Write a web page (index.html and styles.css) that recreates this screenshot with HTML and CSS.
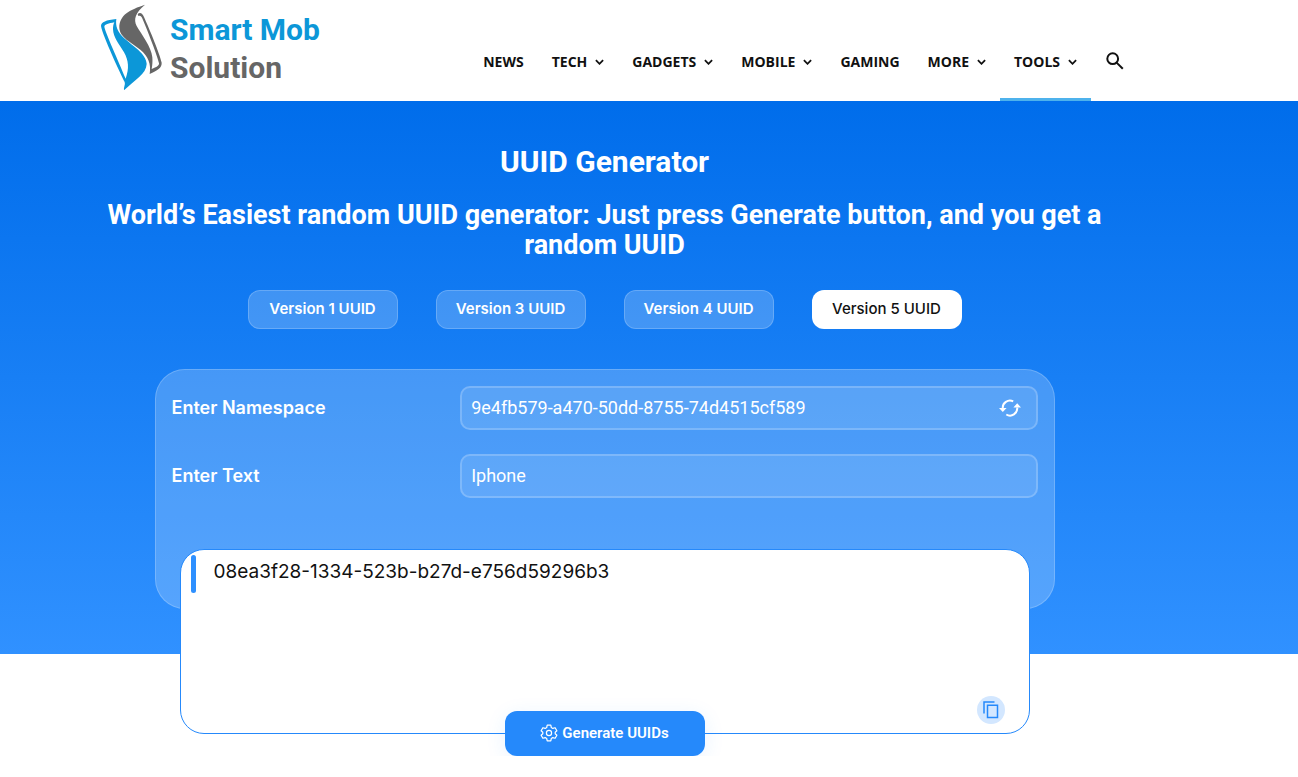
FILE: index.html
```html
<!DOCTYPE html>
<html lang="en">
<head>
    <meta charset="UTF-8">
    <meta name="viewport" content="width=device-width, initial-scale=1.0">
    <title>UUID Generator</title>
    <link rel="stylesheet" href="styles.css">
</head>
<body>
    <header class="site-header">
        <a class="logo" href="#">
            <svg class="logo-mark" viewBox="0 0 210 285" aria-hidden="true">
                <path fill="#0c97d8" fill-rule="evenodd" d="M9 78C10 66 24 60 55 57C52 78 58 95 77 113C104 138 145 160 146 192C145 222 110 240 78 271C76 262 83 254 80 246C68 222 14 108 9 78ZM19 80C23 100 60 180 83 236C94 205 92 182 78 157C62 130 46 112 45 88C45 79 46 73 49 67C32 70 20 73 19 80Z"/>
                <path fill="#666" fill-rule="evenodd" d="M141 14C112 38 106 58 116 78C131 104 160 140 163 172C164 186 163 197 161 207C176 202 184 196 183 190C172 151 149 94 134 58C131 50 128 46 121 48L119 42C127 35 134 41 139 53C157 94 184 158 191 188C192 204 178 211 155 222C160 192 151 169 127 149C102 128 65 113 64 83C64 44 96 29 141 14Z"/>
            </svg>
            <span class="logo-text"><span class="logo-top">Smart Mob</span><span>Solution</span></span>
        </a>
        <nav class="menu">
            <a href="#">NEWS</a>
            <a href="#">TECH <svg class="caret" viewBox="0 0 10 6"><path d="M1 1l4 4 4-4"/></svg></a>
            <a href="#">GADGETS <svg class="caret" viewBox="0 0 10 6"><path d="M1 1l4 4 4-4"/></svg></a>
            <a href="#">MOBILE <svg class="caret" viewBox="0 0 10 6"><path d="M1 1l4 4 4-4"/></svg></a>
            <a href="#">GAMING</a>
            <a href="#">MORE <svg class="caret" viewBox="0 0 10 6"><path d="M1 1l4 4 4-4"/></svg></a>
            <a class="current" href="#">TOOLS <svg class="caret" viewBox="0 0 10 6"><path d="M1 1l4 4 4-4"/></svg></a>
            <button class="search" type="button" aria-label="Search">
                <svg viewBox="0 0 18 18"><circle cx="6.7" cy="6.7" r="5.4"/><path d="M10.6 10.6l6.2 6.2"/></svg>
            </button>
        </nav>
    </header>

    <main class="hero">
        <h1>UUID Generator</h1>
        <h2>World’s Easiest random UUID generator: Just press Generate button, and you get a random UUID</h2>

        <div class="tabs">
            <button type="button">Version 1 UUID</button>
            <button type="button">Version 3 UUID</button>
            <button type="button">Version 4 UUID</button>
            <button type="button" class="active">Version 5 UUID</button>
        </div>

        <form class="panel">
            <div class="field">
                <label for="namespace">Enter Namespace</label>
                <div class="box">
                    <input type="text" id="namespace" value="9e4fb579-a470-50dd-8755-74d4515cf589">
                    <button type="button" class="refresh" aria-label="New namespace">
                        <svg viewBox="0 0 22 18"><path class="arc" d="M14.2 2.3A7.2 7.2 0 0 0 3.8 9.5M7.3 15.5A7.2 7.2 0 0 0 18.2 8.5"/><path class="head" d="M0 9h7.6l-3.8 4zM14.4 8.5H22l-3.8-4.2z"/></svg>
                    </button>
                </div>
            </div>
            <div class="field">
                <label for="text">Enter Text</label>
                <div class="box">
                    <input type="text" id="text" value="Iphone">
                </div>
            </div>
        </form>

        <div class="result">
            <p>08ea3f28-1334-523b-b27d-e756d59296b3</p>
            <button type="button" class="copy" aria-label="Copy">
                <svg viewBox="0 0 16 18"><path d="M1 12.5V1h10.5"/><path d="M4.5 4.2h10v12.3h-10z"/></svg>
            </button>
        </div>

        <button type="button" class="generate">
            <svg viewBox="0 0 18 18"><path d="M7.2 1.2h3.6l.5 2.3 1.5.9 2.3-.7 1.8 3.1L15.2 8.3v1.4l1.7 1.5-1.8 3.1-2.3-.7-1.5.9-.5 2.3H7.2l-.5-2.3-1.5-.9-2.3.7-1.8-3.1 1.7-1.5V8.3L1.1 6.8l1.8-3.1 2.3.7 1.5-.9z"/><circle cx="9" cy="9" r="2.6"/></svg>
            Generate UUIDs
        </button>
    </main>
</body>
</html>
```

FILE: styles.css
```css
* {
    box-sizing: border-box;
}
body {
    margin: 0;
    background-color: #fff;
    font-family: Roboto, sans-serif;
}
button {
    font-family: inherit;
    border: none;
    padding: 0;
    cursor: pointer;
}
svg {
    fill: none;
    stroke-width: 2px;
}

/* header */
.site-header {
    display: flex;
    justify-content: space-between;
    height: 101px;
    padding: 0 173px 0 98px;
}
.logo {
    display: flex;
    gap: 2px;
    text-decoration: none;
}
.logo-mark {
    width: 70px;
    height: 95px;
}
.logo-text {
    display: flex;
    flex-direction: column;
    padding-top: 11px;
    font-size: 30px;
    font-weight: 700;
    line-height: 38px;
    color: #666;
}
.logo-top {
    color: #0c97d8;
}
.menu {
    display: flex;
    padding-top: 25px;
}
.menu a {
    display: flex;
    align-items: center;
    gap: 8px;
    padding: 0 14px;
    border-bottom: 3px solid transparent;
    font-family: "Open Sans", sans-serif;
    font-size: 14px;
    font-weight: 700;
    color: #111;
    text-decoration: none;
}
.menu a.current {
    border-color: #4db2ec;
}
.caret {
    width: 9px;
    height: 6px;
    stroke: #111;
}
.search {
    width: 34px;
    padding: 0 0 2px 14px;
    background: none;
}
.search svg {
    width: 18px;
    height: 18px;
    stroke: #111;
}

/* blue area, ends behind the result box */
.hero {
    display: flex;
    flex-direction: column;
    align-items: center;
    padding: 43px 184px 0 95px;
    background: linear-gradient(#006deb, #3091ff) no-repeat 0 0 / 100% calc(100% - 102px);
    color: #fff;
}
h1 {
    margin: 0;
    font-size: 30px;
    line-height: 36px;
}
h2 {
    margin: 20px 0 30px;
    font-size: 27px;
    line-height: 30px;
    text-align: center;
}
.tabs {
    display: flex;
    gap: 38px;
    margin-bottom: 40px;
}
.tabs button {
    width: 150px;
    height: 39px;
    padding-bottom: 2px;
    border: 1px solid rgba(255, 255, 255, 0.2);
    border-radius: 12px;
    background-color: rgba(255, 255, 255, 0.2);
    font-family: Inter, sans-serif;
    font-size: 15px;
    font-weight: 600;
    color: #fff;
}
.tabs button.active {
    background-color: #fff;
    font-weight: 500;
    color: #111;
}
.panel {
    width: 100%;
    max-width: 900px;
    height: 240px;
    padding: 16px;
    border: 1px solid rgba(255, 255, 255, 0.2);
    border-radius: 30px;
    background-color: rgba(255, 255, 255, 0.2);
}
.field {
    display: grid;
    grid-template-columns: 1fr 2fr;
    align-items: center;
    margin-bottom: 24px;
}
.field label {
    padding-bottom: 2px;
    font-family: Inter, sans-serif;
    font-size: 18px;
    font-weight: 600;
}
.box {
    display: flex;
    align-items: center;
    height: 44px;
    padding: 0 15px 0 9px;
    border: 2px solid rgba(255, 255, 255, 0.2);
    border-radius: 10px;
    background-color: rgba(255, 255, 255, 0.1);
}
.box input {
    flex: 1;
    min-width: 0;
    padding: 0 0 2px;
    border: none;
    outline: none;
    background: none;
    font-family: Roboto, sans-serif;
    font-size: 18px;
    color: #fff;
}
.refresh {
    height: 18px;
    background: none;
}
.refresh svg {
    width: 22px;
    height: 18px;
}
.refresh .arc {
    stroke: #fff;
}
.refresh .head {
    fill: #fff;
}

/* result */
.result {
    display: flex;
    flex-direction: column;
    justify-content: space-between;
    width: 100%;
    max-width: 850px;
    height: 185px;
    margin-top: -60px;
    padding: 5px 24px 9px 10px;
    border: 1px solid #2589fb;
    border-radius: 24px;
    background-color: #fff;
}
.result p {
    display: flex;
    gap: 18px;
    margin: 0;
    height: 38px;
    font-family: Inter, sans-serif;
    font-size: 19px;
    line-height: 34px;
    color: #111;
}
.result p::before {
    content: "";
    width: 5px;
    border-radius: 3px;
    background-color: #2e90ff;
}
.copy {
    display: flex;
    align-items: center;
    justify-content: center;
    align-self: flex-end;
    width: 28px;
    height: 28px;
    border-radius: 50%;
    background-color: #d3e7ff;
}
.copy svg {
    width: 16px;
    height: 18px;
    stroke: #2589fb;
    stroke-width: 1.5px;
}
.generate {
    display: flex;
    align-items: center;
    justify-content: center;
    gap: 4px;
    width: 200px;
    height: 45px;
    margin-top: -23px;
    padding-bottom: 2px;
    border-radius: 12px;
    background-color: #2589fb;
    box-shadow: 0 4px 20px rgba(37, 137, 251, 0.1);
    font-size: 15px;
    font-weight: 600;
    color: #fff;
}
.generate svg {
    width: 18px;
    height: 18px;
    stroke: #fff;
    stroke-width: 1.2px;
    stroke-linejoin: round;
}
```
